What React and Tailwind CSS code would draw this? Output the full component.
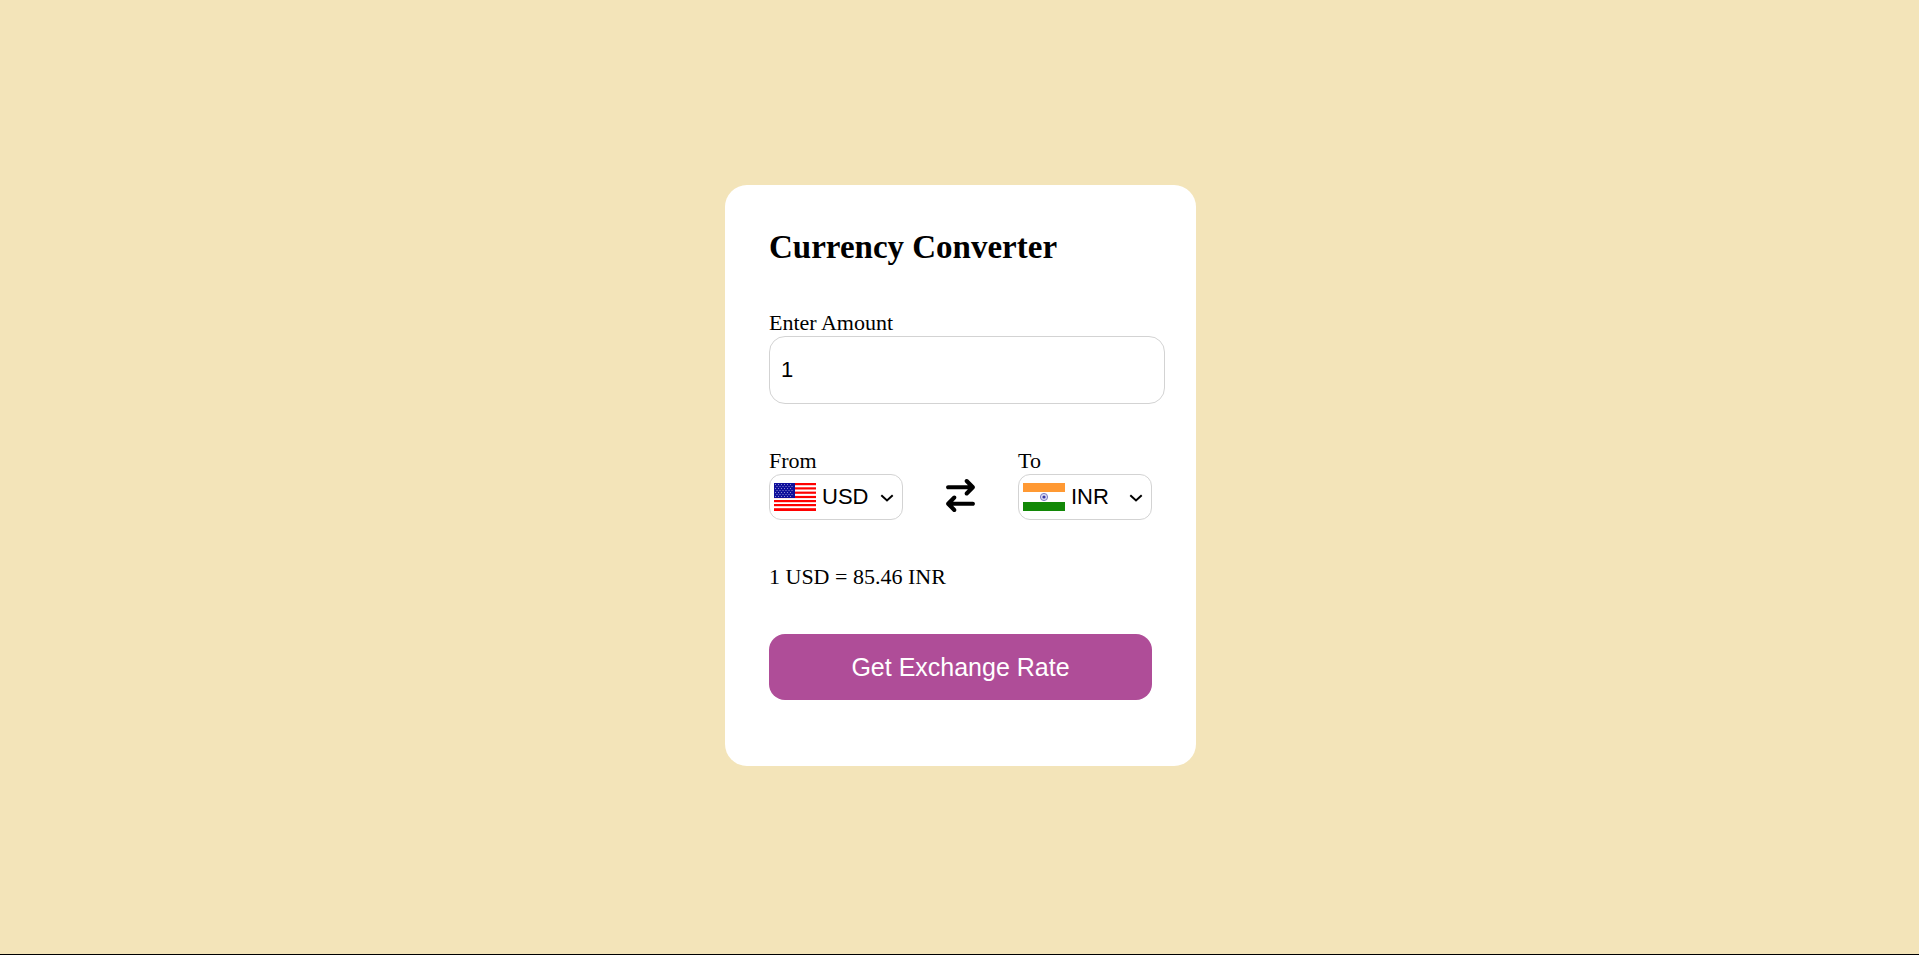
import React, { useState } from "react";
import { FaArrowRightArrowLeft } from "react-icons/fa6";

const RATES = { USD: 1, INR: 85.46 };

const STAR_ROWS = [1.5, 3.5, 5.5, 7.5, 9.5, 11.5, 13.5];
const STAR_COLS = [1.5, 4.5, 7.5, 10.5, 13.5, 16.5];

function UsFlag() {
    return (
        <svg className="h-7 w-[42px] shrink-0" viewBox="0 0 42 28" aria-hidden="true">
            <rect width="42" height="28" fill="#fff" />
            {[0, 4.3, 8.6, 12.9, 17, 21, 25.2].map((y) => (
                <rect key={y} y={y} width="42" height={y > 25 ? 2.8 : 2.2} fill="#ff0000" />
            ))}
            <rect width="21" height="15" fill="#10109c" />
            {STAR_ROWS.map((y, i) =>
                STAR_COLS.map((x) => (
                    <circle key={`${x}-${y}`} cx={x + (i % 2) * 1.5} cy={y} r="0.5" fill="#b4b4e2" />
                ))
            )}
        </svg>
    );
}

function IndiaFlag() {
    return (
        <svg className="h-7 w-[42px] shrink-0" viewBox="0 0 42 28" aria-hidden="true">
            <rect width="42" height="28" fill="#fff" />
            <rect width="42" height="9" fill="#ff9933" />
            <rect y="19" width="42" height="9" fill="#128807" />
            <circle cx="21" cy="14" r="3.6" fill="#dcdcf2" stroke="#7070c0" strokeWidth="0.9" />
            <circle cx="21" cy="14" r="1.6" fill="#3a3aa6" />
        </svg>
    );
}

const FLAGS = { USD: UsFlag, INR: IndiaFlag };

function CurrencySelect({ id, label, value, onChange }) {
    const Flag = FLAGS[value];

    return (
        <div>
            <label htmlFor={id} className="block">{label}</label>
            <div className="relative flex h-[46px] w-[134px] items-center rounded-xl border border-[#d3d3d3] pl-1">
                <Flag />
                <select
                    id={id}
                    value={value}
                    onChange={(e) => onChange(e.target.value)}
                    className="h-full min-w-0 flex-1 cursor-pointer appearance-none bg-transparent pl-[6px] font-['Liberation_Sans',Arial,sans-serif] outline-none"
                >
                    {Object.keys(RATES).map((code) => (
                        <option key={code} value={code}>{code}</option>
                    ))}
                </select>
                <svg
                    className="pointer-events-none absolute right-2 top-[19px] h-2 w-[14px]"
                    viewBox="0 0 14 8"
                    fill="none"
                    stroke="#000"
                    strokeWidth="2"
                    aria-hidden="true"
                >
                    <path d="M1.3 1.2 7 6.4l5.7-5.2" />
                </svg>
            </div>
        </div>
    );
}

export default function App() {
    const [amount, setAmount] = useState("1");
    const [from, setFrom] = useState("USD");
    const [to, setTo] = useState("INR");
    const [message, setMessage] = useState("1 USD = 85.46 INR");

    const swap = () => {
        setFrom(to);
        setTo(from);
    };

    const handleSubmit = (e) => {
        e.preventDefault();
        const total = (Number(amount) * RATES[to]) / RATES[from];
        setMessage(`${amount} ${from} = ${total.toFixed(2)} ${to}`);
    };

    return (
        <div className="flex min-h-screen items-center justify-center border-b border-black bg-[#f3e4b9] pb-[3px] pl-0.5 font-['Liberation_Serif','Times_New_Roman',serif] text-[22px] leading-[26px] text-black">
            <main className="w-full max-w-[471px] rounded-[22px] bg-white px-11 pt-11 pb-[66px]">
                <h2 className="text-[33px] leading-[37px] font-bold">Currency Converter</h2>
                <form onSubmit={handleSubmit} className="mt-11 flex flex-col gap-11">
                    <div className="-mr-[13px]">
                        <label htmlFor="amount" className="block">Enter Amount</label>
                        <input
                            id="amount"
                            type="text"
                            value={amount}
                            onChange={(e) => setAmount(e.target.value)}
                            className="block h-[68px] w-full rounded-2xl border border-[#d3d3d3] px-[11px] font-['Liberation_Sans',Arial,sans-serif] outline-none"
                        />
                    </div>
                    <div className="flex items-end justify-between">
                        <CurrencySelect id="from" label="From" value={from} onChange={setFrom} />
                        <button type="button" onClick={swap} aria-label="Swap currencies" className="mb-2 cursor-pointer">
                            <FaArrowRightArrowLeft className="block size-[33px]" />
                        </button>
                        <CurrencySelect id="to" label="To" value={to} onChange={setTo} />
                    </div>
                    <p>{message}</p>
                    <button
                        type="submit"
                        className="h-[66px] w-full cursor-pointer rounded-2xl bg-[#af4d98] font-['Liberation_Sans',Arial,sans-serif] text-[25px] text-white"
                    >
                        Get Exchange Rate
                    </button>
                </form>
            </main>
        </div>
    );
}
